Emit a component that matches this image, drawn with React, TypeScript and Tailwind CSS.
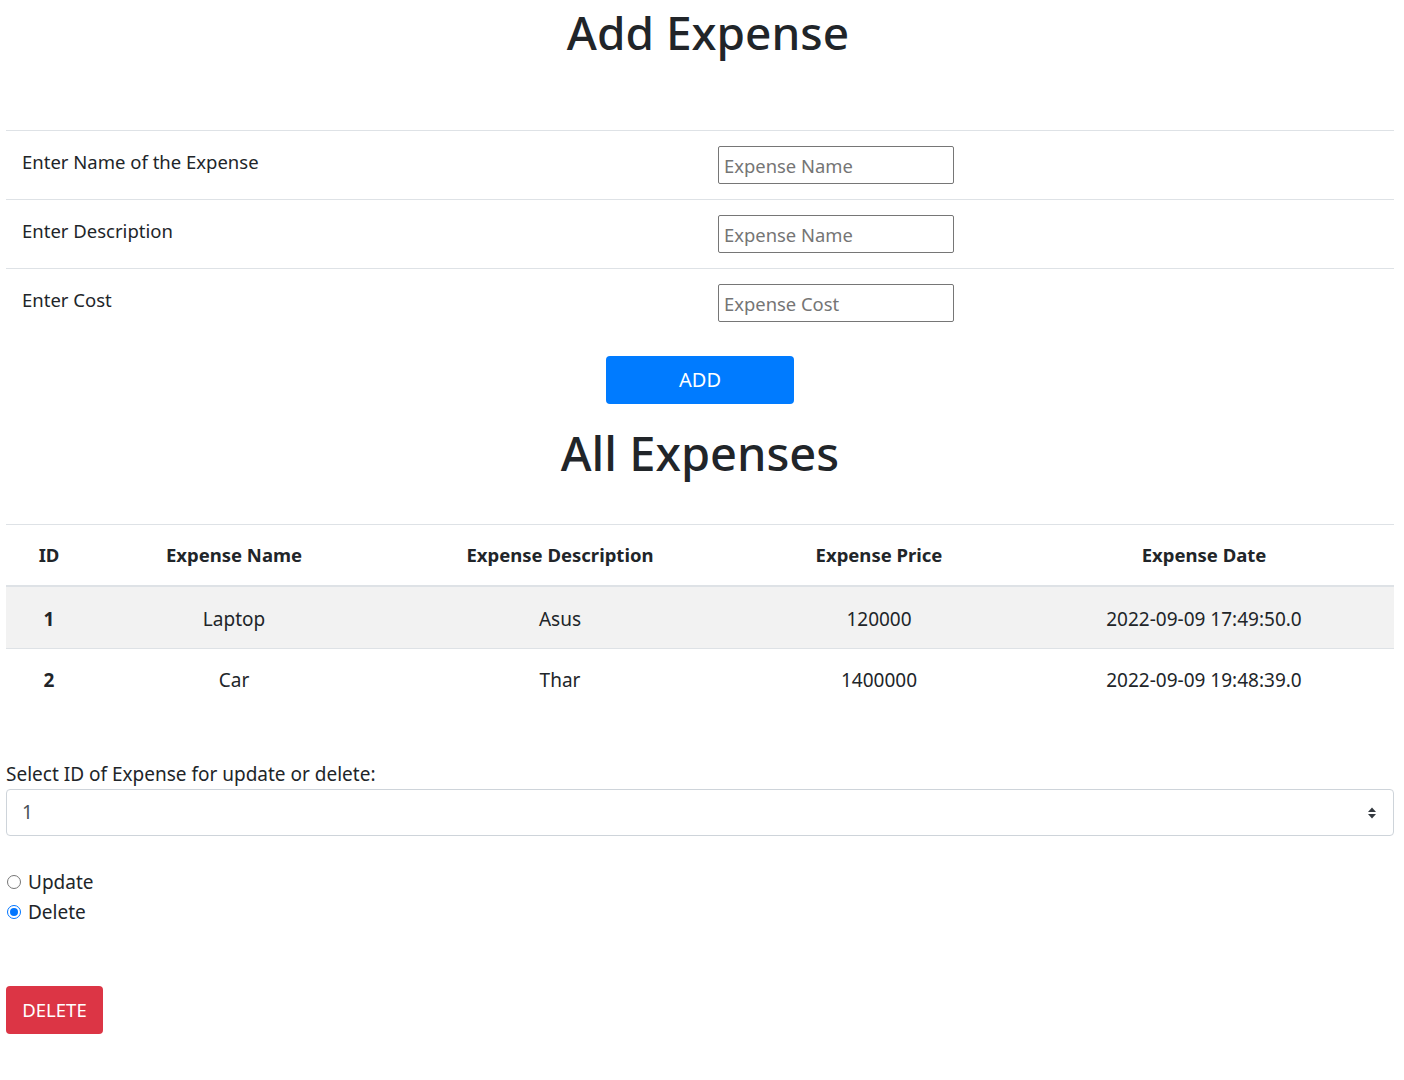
import React from "react";

const font = { fontFamily: '"Segoe UI", "Noto Sans", sans-serif' };

const formRows = [
  { label: "Enter Name of the Expense", placeholder: "Expense Name" },
  { label: "Enter Description", placeholder: "Expense Name" },
  { label: "Enter Cost", placeholder: "Expense Cost" },
];

const expenses = [
  { id: 1, name: "Laptop", desc: "Asus", price: "120000", date: "2022-09-09 17:49:50.0" },
  { id: 2, name: "Car", desc: "Thar", price: "1400000", date: "2022-09-09 19:48:39.0" },
];

const cols = "grid grid-cols-[86px_284px_368px_270px_1fr]";

export default function App() {
  return (
    <div className="min-h-[1080px] bg-white pl-[6px] pr-[10px] text-[#212529]" style={font}>
      <h1 className="pl-[16px] text-center text-[46px] font-medium leading-[64px]">Add Expense</h1>

      <div className="mt-[66px] border-t border-[#dee2e6]">
        {formRows.map((r, i) => (
          <div
            key={i}
            className={`flex h-[69px] ${i < 2 ? "border-b border-[#dee2e6]" : ""}`}
          >
            <div className="w-[712px] pl-4 pt-[19px] text-[18.5px] leading-6">{r.label}</div>
            <div className="pt-[15px]">
              <input
                className="h-[38px] w-[236px] rounded-[2px] border border-[#767676] px-[5px] text-[18.4px] outline-none placeholder:text-[#757575]"
                placeholder={r.placeholder}
              />
            </div>
          </div>
        ))}
      </div>

      <div className="mt-[18px] flex justify-center">
        <button className="h-12 w-[188px] rounded bg-[#007bff] text-xl text-white">ADD</button>
      </div>

      <h1 className="mt-[19px] text-center text-[47px] font-medium leading-[60px]">All Expenses</h1>

      <div className="mt-[41px] border-t border-[#dee2e6] text-[19px]">
        <div className={`${cols} h-[62px] items-center border-b-2 border-[#dee2e6] text-[18.5px] font-bold`}>
          <div className="text-center">ID</div>
          <div className="text-center">Expense Name</div>
          <div className="text-center">Expense Description</div>
          <div className="text-center">Expense Price</div>
          <div className="text-center">Expense Date</div>
        </div>
        {expenses.map((e, i) => (
          <div
            key={e.id}
            className={`${cols} h-[62px] items-center ${i === 0 ? "border-b border-[#dee2e6] bg-[#f2f2f2] pt-[4px]" : "pt-[1px]"}`}
          >
            <div className="text-center font-bold">{e.id}</div>
            <div className="text-center">{e.name}</div>
            <div className="text-center">{e.desc}</div>
            <div className="text-center">{e.price}</div>
            <div className="text-center">{e.date}</div>
          </div>
        ))}
      </div>

      <div className="mt-[50px] text-[19px] leading-[27px]">Select ID of Expense for update or delete:</div>
      <div className="relative mt-px flex h-[47px] items-center rounded border border-[#ced4da] pl-[15px] text-[19px] text-[#495057]">
        1
        <svg className="absolute right-[16px] top-1/2 -translate-y-1/2" width="10" height="14" viewBox="0 0 10 14">
          <path d="M1 6 L5 1.5 L9 6 Z" fill="#343a40" />
          <path d="M1 8 L5 12.5 L9 8 Z" fill="#343a40" />
        </svg>
      </div>

      <div className="mt-[31px] flex flex-col text-[19px] leading-[30px]">
        <label className="flex items-center gap-[7px]">
          <span className="ml-px h-[14px] w-[14px] rounded-full border border-[#767676] bg-white" />
          Update
        </label>
        <label className="flex items-center gap-[7px]">
          <span className="ml-px flex h-[14px] w-[14px] items-center justify-center rounded-full border border-[#0075ff] bg-white">
            <span className="h-[8px] w-[8px] rounded-full bg-[#0075ff]" />
          </span>
          Delete
        </label>
      </div>

      <button className="mt-[59px] h-12 w-[97px] rounded bg-[#dc3545] text-[18.5px] text-white">DELETE</button>
    </div>
  );
}
